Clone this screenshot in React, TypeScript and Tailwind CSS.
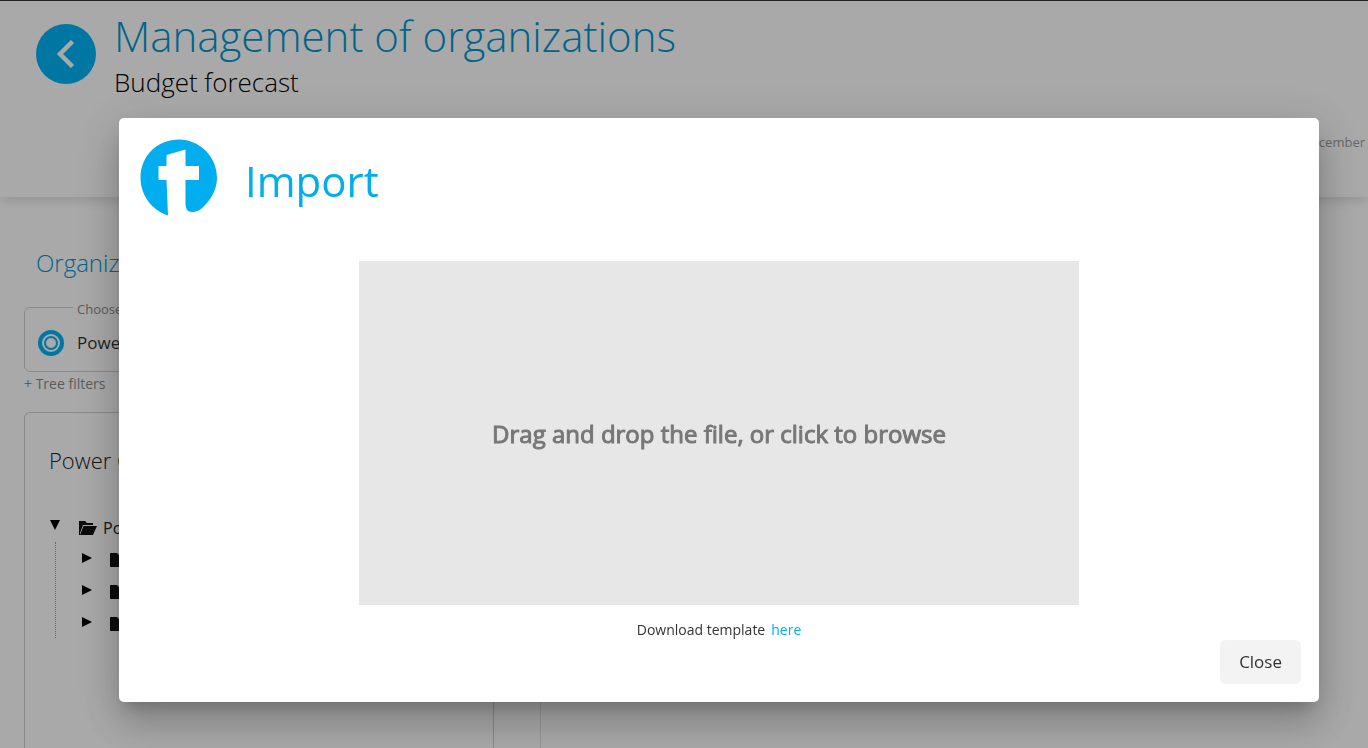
import React from "react";

const branches = ["Production", "Distribution", "Services"];

const Logo = () => (
  <svg viewBox="0 0 78 78" className="size-[78px]" aria-hidden="true">
    <path
      fill="#00aeef"
      d="M29 77.500C12 72 1.500 56 1.500 40C1.500 18 18 1.500 40 1.500C60 1.500 78 18 78 40C78 50 73 60 67 66C62 72 58 74 53 74C48 74 46.500 70 46.500 65V42H60V28H46.500V11.500L27.500 17V28H19.500V42H27.500Z"
    />
  </svg>
);

const Header = () => (
  <header className="relative h-[197px] shrink-0 border-t border-[#333] bg-[#fafafa] pl-9 pt-[11px] shadow-[0_2px_12px_rgba(0,0,0,0.16)]">
    <div className="flex gap-[18px]">
      <button
        type="button"
        aria-label="Back"
        className="mt-3 flex size-[60px] items-center justify-center rounded-full bg-[#00aeef]"
      >
        <svg viewBox="0 0 60 60" className="size-[60px]" aria-hidden="true">
          <path
            d="M36.500 17.500L24 30L36.500 42.500"
            fill="none"
            stroke="#fafafa"
            strokeWidth="4.500"
          />
        </svg>
      </button>
      <div>
        <h1 className="text-[42px] leading-[48px] font-light text-[#0094cb]">
          Management of organizations
        </h1>
        <p className="text-[26px] leading-[44px] font-light text-black">
          Budget forecast
        </p>
      </div>
    </div>
    <p className="mt-7 pr-[3px] text-right text-[13px] leading-5 text-[#999]">
      31 December
    </p>
  </header>
);

const Folder = () => (
  <svg viewBox="0 0 18 14" className="h-3.5 w-[18px]" aria-hidden="true">
    <path d="M0 0h6l2 2h6v2H4L1 12V14H0z M4.500 5H18l-4 9H1z" fill="#111" />
  </svg>
);

const Tree = () => (
  <section className="flex-1 rounded-t-md border border-b-0 border-[#ccc] px-6 pt-[31px]">
    <h3 className="text-[22px] leading-8 font-light text-[#222]">
      Power Company
    </h3>
    <div className="mt-[38px] flex h-7 items-center">
      <svg viewBox="0 0 12 10" className="mb-1.5 h-2.5 w-3" aria-hidden="true">
        <path d="M1 0h10L6 10z" />
      </svg>
      <div className="ml-[18px] flex items-center gap-1.5">
        <Folder />
        <span className="text-base text-[#222]">Power Company</span>
      </div>
    </div>
    <ul className="ml-1.5 border-l border-dotted border-[#999] pl-[26px]">
      {branches.map((name) => (
        <li key={name} className="flex h-8 items-center">
          <svg viewBox="0 0 10 10" className="size-2.5" aria-hidden="true">
            <path d="M0 0l10 5L0 10z" />
          </svg>
          <svg
            viewBox="0 0 18 14"
            className="mt-1 mr-1.5 ml-[18px] h-3.5 w-[18px]"
            aria-hidden="true"
          >
            <path d="M0 0h7l2 2h9v12H0z" fill="#111" />
          </svg>
          <span className="text-base">{name}</span>
        </li>
      ))}
    </ul>
  </section>
);

const Organizations = () => (
  <aside className="flex w-[541px] flex-col border-r border-[#ddd] pt-12 pr-[46px] pl-6">
    <h2 className="pl-3 text-2xl leading-9 font-light text-[#0094cb]">
      Organizations
    </h2>
    <fieldset className="mt-4 h-[75px] rounded-md border border-[#ccc] px-3">
      <legend className="ml-9 px-1 pt-1 text-[13px] leading-4 text-[#888]">
        Choose an organization
      </legend>
      <div className="flex items-center gap-3 pt-3">
        <svg viewBox="0 0 28 28" className="size-7" aria-hidden="true">
          <g fill="none" stroke="#00aeef">
            <circle cx="14" cy="14" r="11" strokeWidth="4" />
            <circle cx="14" cy="14" r="6" strokeWidth="2" />
          </g>
        </svg>
        <span className="text-[17px] text-[#333]">Power Company</span>
      </div>
    </fieldset>
    <button
      type="button"
      className="mb-4 self-start text-sm leading-6 text-[#888]"
    >
      + Tree filters
    </button>
    <Tree />
  </aside>
);

const ImportDialog = () => (
  <div
    role="dialog"
    aria-labelledby="import-title"
    className="flex w-full flex-col rounded-[5px] bg-white px-[18px] pt-5 pb-[18px] shadow-[0_11px_15px_-7px_rgba(0,0,0,0.2),0_24px_38px_3px_rgba(0,0,0,0.14),0_9px_46px_8px_rgba(0,0,0,0.12)]"
  >
    <div className="flex items-center gap-7 pl-0.5">
      <Logo />
      <h2
        id="import-title"
        className="pt-2 text-[42px] leading-[60px] text-[#00aeef]"
      >
        Import
      </h2>
    </div>
    <button
      type="button"
      className="mx-auto mt-[45px] h-[344px] w-3/5 min-w-[720px] bg-[#e7e7e7] pt-0.5 text-2xl text-[#777] [-webkit-text-stroke:1px_#777]"
    >
      Drag and drop the file, or click to browse
    </button>
    <p className="mt-[15px] flex justify-center gap-1.5 text-sm leading-5 text-[#333]">
      Download template
      <a href="#template" className="text-[#00aeef]">
        here
      </a>
    </p>
    <button
      type="button"
      className="h-11 self-end rounded-md bg-[#f3f3f3] px-[19px] text-[17px] text-[#333]"
    >
      Close
    </button>
  </div>
);

const App = () => {
  return (
    <div className="flex h-screen flex-col overflow-hidden bg-[#fafafa] font-['Open_Sans',sans-serif]">
      <Header />
      <main className="flex min-h-0 flex-1">
        <Organizations />
      </main>
      {/* Backdrop */}
      <div className="fixed inset-0 flex items-start bg-black/32 pt-[118px] pr-[49px] pl-[119px]">
        <ImportDialog />
      </div>
    </div>
  );
};

export default App;
